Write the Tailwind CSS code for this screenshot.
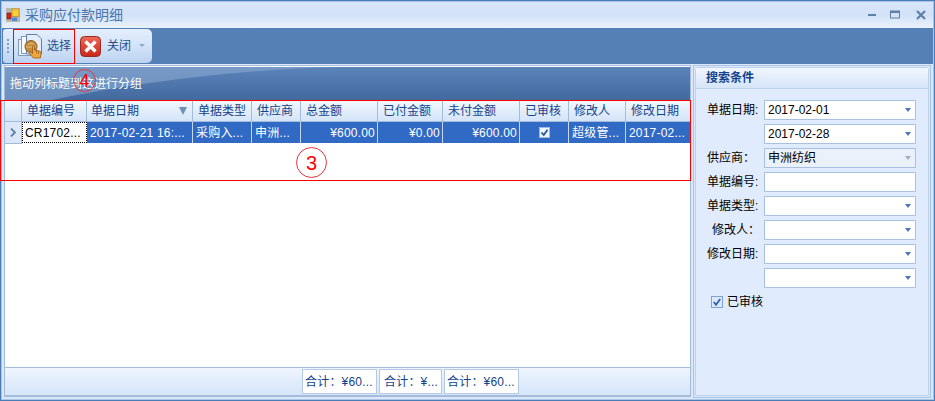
<!DOCTYPE html>
<html lang="zh-CN">
<head>
  <meta charset="UTF-8">
  <title>采购应付款明细</title>
  <script src="https://cdn.jsdelivr.net/npm/@tailwindcss/browser@4"></script>
</head>
<body class="relative w-[935px] h-[401px] overflow-hidden bg-[#4a7db5] font-['Liberation_Sans','Noto_Sans_CJK_SC',sans-serif] text-[12px] leading-none">
  <div class="flex flex-col w-full h-full p-px">
    <div class="flex flex-col flex-1 border border-[#a9c5e8] bg-[#dce8fa]">

      <!-- title bar -->
      <div class="flex items-center h-[26px] shrink-0 pl-[4px] pr-[7px] bg-gradient-to-b from-[#d6e5f9] via-[#d3e2f7] to-[#e9f2fd]">
        <svg class="w-[14px] h-[14px] shrink-0" viewBox="0 0 14 14">
          <rect width="14" height="14" fill="#b9b8ae"/>
          <rect x="6" y="1" width="7" height="7.500" fill="#f6cf3a" stroke="#d08a20" stroke-width=".8"/>
          <rect x="1" y="5" width="4" height="6" fill="#c8281c" stroke="#7a1a12" stroke-width=".6"/>
          <rect x="6" y="9.500" width="5" height="3.500" fill="#4c8ae0"/>
        </svg>
        <span class="ml-[5px] text-[14px] text-[#4a76ab]">采购应付款明细</span>
        <div class="flex items-center ml-auto gap-[14px]">
          <svg class="w-[8px] h-[10px]" viewBox="0 0 8 10"><rect y="4" width="8" height="2" fill="#5f7fa6"/></svg>
          <svg class="w-[10px] h-[10px]" viewBox="0 0 10 10"><rect x=".5" y="1" width="9" height="7" fill="none" stroke="#5f7fa6"/><rect x=".5" y="1" width="9" height="2" fill="#5f7fa6"/></svg>
          <svg class="w-[10px] h-[10px] ml-[2px]" viewBox="0 0 10 10"><path d="M1 1 9 9M9 1 1 9" stroke="#5f7fa6" stroke-width="2.200"/></svg>
        </div>
      </div>

      <!-- toolbar -->
      <div class="flex h-[36px] shrink-0 items-center bg-[#5580b5]">
        <div class="flex items-center w-[149px] h-[34px] ml-px rounded-r-[5px] rounded-l-[3px] bg-gradient-to-b from-[#e4effd] via-[#d3e3f8] to-[#bcd3f0] text-[#1f4e8c]">
          <div class="flex flex-col gap-[2px] ml-[4px] w-[3px]">
            <span class="w-[2px] h-[2px] bg-[#7f9dc6]"></span><span class="w-[2px] h-[2px] bg-[#7f9dc6]"></span><span class="w-[2px] h-[2px] bg-[#7f9dc6]"></span><span class="w-[2px] h-[2px] bg-[#7f9dc6]"></span>
          </div>
          <svg class="w-[26px] h-[26px] ml-[8px] shrink-0" viewBox="0 0 26 26">
            <rect x=".500" y="6.500" width="12" height="16" fill="#eef3fb" stroke="#7f9cc0"/>
            <rect x="3.500" y="3.500" width="12" height="17" fill="#f6f9fd" stroke="#7f9cc0"/>
            <path d="M8.500 1.500H19l4.500 4.500V21H8.500z" fill="#e4edf9" stroke="#5f7fa6"/>
            <circle cx="13" cy="13.500" r="6" fill="#c58e3e" stroke="#8a5a1c"/>
            <path d="M10 11.500c2-1.500 4-1.500 6 0M8 14h10" fill="none" stroke="#e3c07c"/>
            <path d="M15.500 25c-1.500-1.500-4-4-4-5.500l1.200-.7 1.800 1.700V13.500c0-1.200 2-1.200 2 0V17l5 1c1 .3 1.500 1 1.500 2l-.5 5z" fill="#eda63e" stroke="#9a5a14" stroke-width=".8"/>
            <path d="M18.500 17.500v3M20.500 18v3" stroke="#9a5a14" stroke-width=".7"/>
          </svg>
          <span class="ml-[3px]">选择</span>
          <svg class="w-[21px] h-[21px] ml-[9px] shrink-0" viewBox="0 0 21 21">
            <defs><linearGradient id="closeRed" x1="0" y1="0" x2="0" y2="1"><stop offset="0" stop-color="#ee6a58"/><stop offset="1" stop-color="#c92418"/></linearGradient></defs>
            <rect x=".5" y=".5" width="20" height="20" rx="4" fill="url(#closeRed)" stroke="#9c2a22"/>
            <path d="M5.500 5.500 15.500 15.500M15.500 5.500 5.500 15.500" stroke="#fff" stroke-width="3.400"/>
          </svg>
          <span class="ml-[6px]">关闭</span>
          <svg class="w-[6px] h-[4px] ml-[8px]" viewBox="0 0 6 4"><path d="M0 0h6L3 3z" fill="#8ea8c8"/></svg>
        </div>
      </div>

      <!-- body -->
      <div class="flex flex-1 min-h-0 pt-px">
        <div class="flex flex-col w-[687px] h-[332px] ml-[2px] border border-[#a3bcdc] bg-white">
          <div class="relative flex items-end h-[34px] pb-[10px] pl-[5px] shrink-0 overflow-hidden border-t border-white bg-gradient-to-b from-[#5c84ba] to-[#426a9f] text-white">
            <svg class="absolute left-0 top-0 w-[685px] h-[34px]" viewBox="0 0 685 34" preserveAspectRatio="none">
              <path d="M0 34H42C120 18 210 4 330 0H0z" fill="#8aa9d0" fill-opacity=".6"/>
            </svg>
            <span class="relative">拖动列标题到这进行分组</span>
          </div>

          <!-- grid header -->
          <div class="flex h-[22px] shrink-0 border-b border-[#a3bcdc] bg-gradient-to-b from-[#f3f8fe] to-[#d4e4f8] text-[#15428b]">
            <div class="w-[17px] shrink-0 border-r border-[#a3bcdc]"></div>
            <div class="flex items-center w-[65px] pl-[5px] border-r border-[#a3bcdc]">单据编号</div>
            <div class="flex items-center justify-between w-[106px] pl-[4px] pr-[5px] border-r border-[#a3bcdc]">单据日期<svg class="w-[8px] h-[8px]" viewBox="0 0 8 8"><path d="M0 0h8L4 8z" fill="#6f8fb8"/></svg></div>
            <div class="flex items-center w-[59px] pl-[5px] border-r border-[#a3bcdc]">单据类型</div>
            <div class="flex items-center w-[49px] pl-[5px] border-r border-[#a3bcdc]">供应商</div>
            <div class="flex items-center w-[77px] pl-[5px] border-r border-[#a3bcdc]">总金额</div>
            <div class="flex items-center w-[65px] pl-[5px] border-r border-[#a3bcdc]">已付金额</div>
            <div class="flex items-center w-[77px] pl-[5px] border-r border-[#a3bcdc]">未付金额</div>
            <div class="flex items-center w-[49px] pl-[5px] border-r border-[#a3bcdc]">已审核</div>
            <div class="flex items-center w-[57px] pl-[5px] border-r border-[#a3bcdc]">修改人</div>
            <div class="flex items-center flex-1 pl-[5px]">修改日期</div>
          </div>

          <!-- selected row -->
          <div class="flex h-[21px] shrink-0 bg-[#316ac5] text-white tracking-[.2px]">
            <div class="flex items-center justify-center w-[17px] shrink-0 border-r border-[#a3bcdc] bg-[#dce8fa]">
              <svg class="w-[6px] h-[9px]" viewBox="0 0 6 9"><path d="M1 .500 5 4.500 1 8.500" fill="none" stroke="#5c7fae" stroke-width="1.800"/></svg>
            </div>
            <div class="flex items-center w-[65px] pl-[2px] bg-white text-black border border-dotted border-black">CR1702...</div>
            <div class="flex items-center w-[106px] pl-[3px] border-r border-[#c5d6ee]">2017-02-21 16:...</div>
            <div class="flex items-center w-[59px] pl-[3px] border-r border-[#c5d6ee]">采购入...</div>
            <div class="flex items-center w-[49px] pl-[3px] border-r border-[#c5d6ee]">申洲...</div>
            <div class="flex items-center justify-end w-[77px] pr-[2px] border-r border-[#c5d6ee]">¥600.00</div>
            <div class="flex items-center justify-end w-[65px] pr-[2px] border-r border-[#c5d6ee]">¥0.00</div>
            <div class="flex items-center justify-end w-[77px] pr-[2px] border-r border-[#c5d6ee]">¥600.00</div>
            <div class="flex items-center justify-center w-[49px] border-r border-[#c5d6ee]">
              <svg class="w-[11px] h-[11px]" viewBox="0 0 11 11"><rect x=".5" y=".5" width="10" height="10" fill="#eef4fc" stroke="#9db8dc"/><path d="M2.500 5.500 4.800 8 8.500 2.800" fill="none" stroke="#1f4e8c" stroke-width="1.700"/></svg>
            </div>
            <div class="flex items-center w-[57px] pl-[3px] border-r border-[#c5d6ee]">超级管...</div>
            <div class="flex items-center flex-1 pl-[3px]">2017-02...</div>
          </div>
          <div class="w-[17px] border-t border-[#a3bcdc]"></div>
          <div class="flex-1"></div>

          <!-- footer -->
          <div class="flex items-center h-[29px] shrink-0 border-y border-[#a3bcdc] bg-gradient-to-b from-[#eef5fe] to-[#d6e5f9] pl-[297px] gap-[2px] text-[#15428b] tracking-[.2px]">
            <div class="flex items-center w-[75px] h-[25px] pl-[2px] border border-[#b4c9e6] bg-white">合计：¥60...</div>
            <div class="flex items-center w-[63px] h-[25px] pl-[4px] border border-[#b4c9e6] bg-white">合计：¥...</div>
            <div class="flex items-center w-[75px] h-[25px] pl-[2px] border border-[#b4c9e6] bg-white">合计：¥60...</div>
          </div>
        </div>

        <!-- search panel -->
        <div class="flex-1 ml-[2px] mr-[2px] h-[333px] border border-[#a9c5e8] p-px">
          <div class="flex flex-col h-full rounded-t-[3px] border border-[#bcd2ef] bg-[#e0ecfd]">
            <div class="flex items-center h-[21px] shrink-0 pl-[10px] border-b border-[#bcd2ef] bg-gradient-to-b from-[#f0f6fe] to-[#d6e5f9] font-bold text-[#15428b]">搜索条件</div>
            <div class="flex flex-col gap-[4px] pt-[11px] pl-[11px]">
              <div class="flex items-center h-[20px]"><span class="w-[57px]">单据日期:</span>
                <div class="flex items-center justify-between w-[152px] h-[20px] px-[3px] pr-[4px] border border-[#a9c0e0] bg-white">2017-02-01<svg class="w-[6px] h-[4px]" viewBox="0 0 6 4"><path d="M0 0h6L3 4z" fill="#4a78b8"/></svg></div></div>
              <div class="flex items-center h-[20px]"><span class="w-[57px]"></span>
                <div class="flex items-center justify-between w-[152px] h-[20px] px-[3px] pr-[4px] border border-[#a9c0e0] bg-white">2017-02-28<svg class="w-[6px] h-[4px]" viewBox="0 0 6 4"><path d="M0 0h6L3 4z" fill="#4a78b8"/></svg></div></div>
              <div class="flex items-center h-[20px]"><span class="w-[57px]">供应商：</span>
                <div class="flex items-center justify-between w-[152px] h-[20px] px-[3px] pr-[4px] border border-[#a9c0e0] bg-[#ebf1fa]">申洲纺织<svg class="w-[6px] h-[4px]" viewBox="0 0 6 4"><path d="M0 0h6L3 4z" fill="#9db0c8"/></svg></div></div>
              <div class="flex items-center h-[20px]"><span class="w-[57px]">单据编号:</span>
                <div class="w-[152px] h-[20px] border border-[#a9c0e0] bg-white"></div></div>
              <div class="flex items-center h-[20px]"><span class="w-[57px]">单据类型:</span>
                <div class="flex items-center justify-end w-[152px] h-[20px] pr-[4px] border border-[#a9c0e0] bg-white"><svg class="w-[6px] h-[4px]" viewBox="0 0 6 4"><path d="M0 0h6L3 4z" fill="#4a78b8"/></svg></div></div>
              <div class="flex items-center h-[20px]"><span class="w-[57px] pl-[5px]">修改人：</span>
                <div class="flex items-center justify-end w-[152px] h-[20px] pr-[4px] border border-[#a9c0e0] bg-white"><svg class="w-[6px] h-[4px]" viewBox="0 0 6 4"><path d="M0 0h6L3 4z" fill="#4a78b8"/></svg></div></div>
              <div class="flex items-center h-[20px]"><span class="w-[57px]">修改日期:</span>
                <div class="flex items-center justify-end w-[152px] h-[20px] pr-[4px] border border-[#a9c0e0] bg-white"><svg class="w-[6px] h-[4px]" viewBox="0 0 6 4"><path d="M0 0h6L3 4z" fill="#4a78b8"/></svg></div></div>
              <div class="flex items-center h-[20px]"><span class="w-[57px]"></span>
                <div class="flex items-center justify-end w-[152px] h-[20px] pr-[4px] border border-[#a9c0e0] bg-white"><svg class="w-[6px] h-[4px]" viewBox="0 0 6 4"><path d="M0 0h6L3 4z" fill="#4a78b8"/></svg></div></div>
              <div class="flex items-center h-[12px] mt-[4px] pl-[4px]">
                <svg class="w-[12px] h-[12px]" viewBox="0 0 12 12"><rect x=".5" y=".5" width="11" height="11" fill="#dbe8f9" stroke="#7fa3d4"/><path d="M2.800 6 5 8.800 9.200 3" fill="none" stroke="#2a62ad" stroke-width="1.800"/></svg>
                <span class="ml-[4px]">已审核</span>
              </div>
            </div>
          </div>
        </div>
      </div>
    </div>
  </div>

  <!-- red annotations drawn over the screenshot -->
  <div class="absolute left-[13px] top-[29px] w-[62px] h-[35px] border border-[#f00]"></div>
  <div class="absolute left-0 top-[100px] w-[691px] h-[81px] border border-[#f00]"></div>
  <div class="absolute left-[73px] top-[69px] flex items-center justify-center w-[23px] h-[23px] rounded-full border border-[#e8343a] text-[18px] text-[#f00]">4</div>
  <div class="absolute left-[296px] top-[147px] flex items-center justify-center w-[31px] h-[31px] rounded-full border border-[#e8343a] text-[20px] text-[#f00]">3</div>
</body>
</html>
